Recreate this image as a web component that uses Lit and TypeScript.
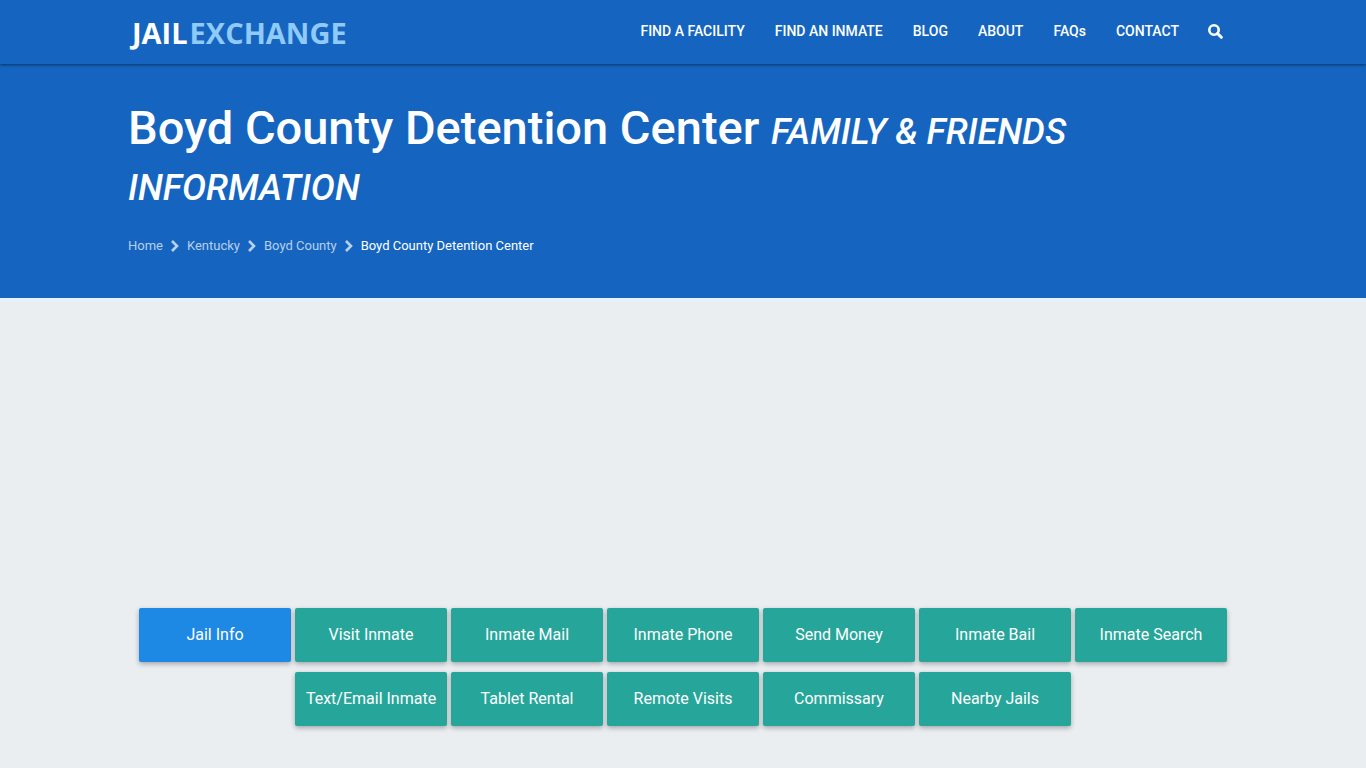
import { LitElement, html, css } from "lit";
import { customElement } from "lit/decorators.js";

const NAV = ["FIND A FACILITY", "FIND AN INMATE", "BLOG", "ABOUT", "FAQs", "CONTACT"];
const CRUMBS = ["Home", "Kentucky", "Boyd County"];
const TABS = [
  "Jail Info", "Visit Inmate", "Inmate Mail", "Inmate Phone", "Send Money", "Inmate Bail",
  "Inmate Search", "Text/Email Inmate", "Tablet Rental", "Remote Visits", "Commissary", "Nearby Jails",
];

@customElement("app-root")
export class AppRoot extends LitElement {
  static styles = css`
    :host {
      display: block;
      min-height: 100vh;
      background: #eaeef1;
      font-family: Roboto, sans-serif;
      color: #fff;
    }
    a { color: inherit; text-decoration: none; }
    .container { max-width: 1110px; margin: 0 auto; }
    .bar {
      position: relative;
      background: #1565c0;
      box-shadow: 0 1px 3px rgba(0, 0, 0, 0.5);
    }
    .bar-inner {
      display: flex;
      justify-content: space-between;
      align-items: center;
      height: 64px;
    }
    .logo {
      font: 700 29px/40px "Open Sans", "Noto Sans", sans-serif;
      padding: 2px 0 0 4px;
      display: flex;
      gap: 2px;
    }
    .logo-light { color: #90caf9; }
    .nav { display: flex; align-items: center; padding-bottom: 2px; }
    .nav a {
      padding: 0 15px;
      font-size: 14px;
      font-weight: 500;
      line-height: 60px;
    }
    .nav .search { display: flex; padding-left: 14px; }
    .hero {
      background: #1565c0;
      padding: 36px 0 39px;
      border-bottom: 4px solid #e9f0fc;
    }
    h1 {
      margin: 0;
      font-size: 47px;
      font-weight: 500;
      line-height: 56px;
    }
    h1 em { font-size: 36px; line-height: 40px; }
    .crumbs {
      display: flex;
      align-items: center;
      gap: 8px;
      margin-top: 21px;
      font-size: 13px;
      line-height: 26px;
    }
    .crumbs a { color: rgba(255, 255, 255, 0.7); }
    .crumbs svg { display: block; }
    .tabs {
      display: flex;
      flex-wrap: wrap;
      justify-content: center;
      gap: 10px 4px;
      padding: 306px 0 42px;
    }
    .tab {
      width: 152px;
      box-sizing: border-box;
      border-radius: 2px;
      background: #26a69a;
      text-align: center;
      font-size: 16px;
      line-height: 54px;
      white-space: nowrap;
      box-shadow: 0 2px 5px rgba(0, 0, 0, 0.3);
    }
    .active { background: #1e88e5; }
    @media (max-width: 1140px) {
      .container { margin: 0 16px; }
      .bar-inner { height: auto; flex-wrap: wrap; }
      .nav { flex-wrap: wrap; }
    }
  `;

  render() {
    return html`
      <header class="bar">
        <div class="container bar-inner">
          <a class="logo" href="#"><span>JAIL</span><span class="logo-light">EXCHANGE</span></a>
          <nav class="nav">
            ${NAV.map((n) => html`<a href="#">${n}</a>`)}
            <a class="search" href="#" aria-label="Search">
              <svg width="15" height="15" viewBox="0 0 15 15" fill="none" stroke="#fff">
                <circle cx="6" cy="6" r="4.7" stroke-width="2.6" />
                <path d="M9.6 9.6L13.3 13.3" stroke-width="3" stroke-linecap="round" />
              </svg>
            </a>
          </nav>
        </div>
      </header>
      <section class="hero">
        <div class="container">
          <h1>Boyd County Detention Center <em>FAMILY &amp; FRIENDS INFORMATION</em></h1>
          <nav class="crumbs" aria-label="Breadcrumb">
            ${CRUMBS.map(
              (c) => html`<a href="#">${c}</a>
                <svg width="8" height="12" viewBox="0 0 8 12" fill="none" stroke="#b9d1ec" stroke-width="2.6">
                  <path d="M1 1L6 6L1 11" />
                </svg>`
            )}
            <span aria-current="page">Boyd County Detention Center</span>
          </nav>
        </div>
      </section>
      <main class="container">
        <nav class="tabs" aria-label="Facility sections">
          ${TABS.map((t, i) => html`<a class="tab ${i === 0 ? "active" : ""}" href="#">${t}</a>`)}
        </nav>
      </main>
    `;
  }
}
